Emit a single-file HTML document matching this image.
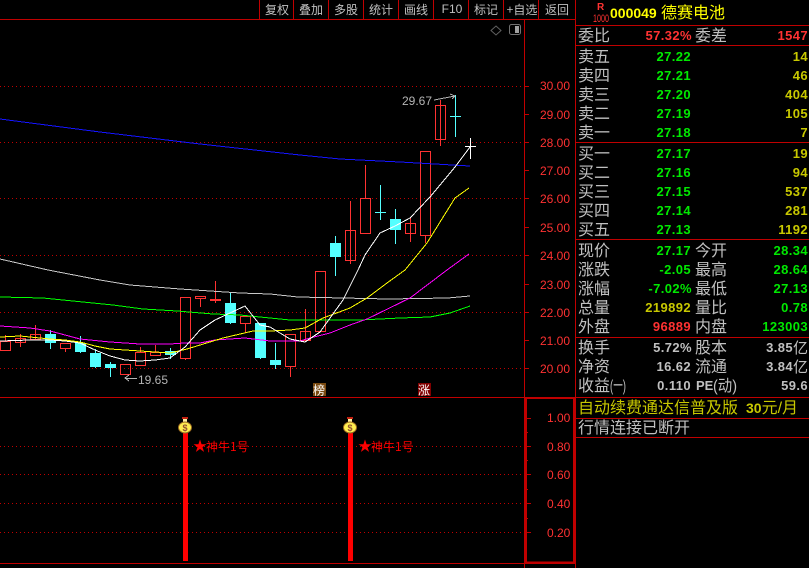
<!DOCTYPE html>
<html><head><meta charset="utf-8"><style>
html,body{margin:0;padding:0;background:#000;width:809px;height:568px;overflow:hidden}
svg{display:block;position:absolute;left:0;top:0}
text{font-family:"WenQuanYi Zen Hei","Noto Sans CJK SC",sans-serif;font-size:16px;fill:#c0c0c0}
.n{font-family:"Liberation Sans",sans-serif;font-weight:bold;font-size:13px;letter-spacing:.4px;text-anchor:end}
.g{fill:#00e800}.y{fill:#c8c800}.r{fill:#ff3232}.w{fill:#c0c0c0}
.t{font-size:12px;text-anchor:middle}
.p{font-family:"Liberation Sans",sans-serif;font-size:12px;fill:#ff3232}
.rc{fill:none;stroke:#ff3232}.rw{stroke:#ff3232}
.cc{fill:#54ffff;stroke:#54ffff}.cw{stroke:#54ffff}
</style></head><body>
<svg width="809" height="568" viewBox="0 0 809 568" xmlns="http://www.w3.org/2000/svg">
<!-- dotted grid -->
<g stroke="#c00000" stroke-dasharray="1 3" shape-rendering="crispEdges" fill="none">
<path d="M0 86.5H524M0 142.5H524M0 198.5H524M0 255.5H524M0 312.5H524M0 368.5H524M0 446.5H524M0 474.5H524M0 503.5H524M0 532.5H524"/>
</g>
<!-- frame lines -->
<g stroke="#c00000" shape-rendering="crispEdges" fill="none">
<path d="M0 19.5H575M524.5 19.5V568M575.5 0V568M0 397.5H575M0 563.5H575"/>
<path d="M259.5 0V19M293.5 0V19M328.5 0V19M363.5 0V19M398.5 0V19M433.5 0V19M468.5 0V19M503.5 0V19M538.5 0V19"/>
<path d="M575 25.5H809M575 45.5H809M575 142.5H809M575 239.5H809M575 337.5H809M575 397.5H809M575 418.5H809M575 437.5H809"/>
<path d="M525 86.5h4M525 114.5h4M525 142.5h4M525 170.5h4M525 198.5h4M525 227.5h4M525 255.5h4M525 284.5h4M525 312.5h4M525 340.5h4M525 368.5h4"/>
<path d="M527 418.5h4M527 446.5h4M527 474.5h4M527 503.5h4M527 532.5h4M527 432.5h1M527 460.5h1M527 489.5h1M527 518.5h1"/>
<rect x="526" y="398" width="48" height="164.500" stroke-width="2"/>
</g>
<!-- candles -->
<g shape-rendering="crispEdges">
<path class="rw" d="M5.5 335V341M20.5 334V347M35.5 325V340M65.5 349V352M140.5 347V352M155.5 345V352M185.5 359V360M200.5 299V307M215.5 281V303M245.5 324V333M290.5 367V377M305.5 309V342M350.5 201V264M365.5 165V198M410.5 218V242M425.5 235V243M440.5 100V146"/>
<path class="cw" d="M50.5 330V349M80.5 336V353M95.5 349V368M110.5 362V377M170.5 348V359M230.5 292V324M260.5 323V359M275.5 343V369M335.5 236V276M380.5 185V220M375 212.5H386M395.5 209V244M455.5 95V137M450 116.5H461"/>
<rect class="rc" x="0.5" y="341.5" width="10" height="9"/>
<rect class="rc" x="15.5" y="338.5" width="10" height="4"/>
<rect class="rc" x="30.5" y="334.5" width="10" height="5"/>
<rect class="cc" x="45.5" y="334.5" width="10" height="8"/>
<rect class="rc" x="60.5" y="343.5" width="10" height="5"/>
<rect class="cc" x="75.5" y="343.5" width="10" height="8"/>
<rect class="cc" x="90.5" y="353.5" width="10" height="13"/>
<rect class="cc" x="105.5" y="364.5" width="10" height="3"/>
<rect class="rc" x="120.5" y="364.5" width="10" height="10"/>
<rect class="rc" x="135.5" y="352.5" width="10" height="13"/>
<rect class="rc" x="150.5" y="352.5" width="10" height="3"/>
<rect class="cc" x="165.5" y="351.5" width="10" height="3"/>
<rect class="rc" x="180.5" y="297.5" width="10" height="61"/>
<rect class="rc" x="195.5" y="296.5" width="10" height="2"/>
<rect x="210" y="299" width="11" height="2" fill="#ff3232"/>
<rect class="cc" x="225.5" y="303.5" width="10" height="19"/>
<rect class="rc" x="240.5" y="316.5" width="10" height="7"/>
<rect class="cc" x="255.5" y="323.5" width="10" height="34"/>
<rect class="cc" x="270.5" y="360.5" width="10" height="4"/>
<rect class="rc" x="285.5" y="334.5" width="10" height="32"/>
<rect class="rc" x="300.5" y="331.5" width="10" height="9"/>
<rect class="rc" x="315.5" y="271.5" width="10" height="60"/>
<rect class="cc" x="330.5" y="243.5" width="10" height="13"/>
<rect class="rc" x="345.5" y="230.5" width="10" height="30"/>
<rect class="rc" x="360.5" y="198.5" width="10" height="35"/>
<rect class="cc" x="390.5" y="219.5" width="10" height="10"/>
<rect class="rc" x="405.5" y="223.5" width="10" height="10"/>
<rect class="rc" x="420.5" y="151.5" width="10" height="84"/>
<rect class="rc" x="435.5" y="105.5" width="10" height="34"/>
</g>
<!-- moving averages -->
<g fill="none" shape-rendering="crispEdges">
<polyline stroke="#c8c8c8" points="0,259 48,270 100,280 130,285 180,289 240,293 270,294 298,297 388,299 448,298 470,296"/>
<polyline stroke="#1414ff" points="0,119 100,132 200,144 300,155 340,159 400,162 470,166"/>
<polyline stroke="#00ff00" points="0,297 43,298 73,301 113,305 143,309 177,311 213,314 240,315 270,318 290,320 330,320 360,320 400,318 430,317 450,313 470,306"/>
<polyline stroke="#ff00ff" points="0,326 30,328 50,331 80,339 110,342 140,344 170,344 185,343 200,343 215,340 245,338 270,341 300,341 310,338 330,333 350,325 367,319 410,298 447,270 469,254"/>
<polyline stroke="#ffff00" points="0,337 20,336 50,339 65,340 80,342 95,346 110,349 125,350 140,351 155,352 170,353 187,349 223,338 253,331 270,331 290,330 305,328 323,318 350,308 367,298 387,283 405,270 427,243 455,198 469,188"/>
<polyline stroke="#ffffff" points="0,341 30,340 50,340 65,341 80,343 95,350 110,356 125,360 140,361 155,360 170,358 185,347 200,330 215,320 230,313 245,306 260,325 270,327 290,339 305,342 320,332 343,300 358,270 365,255 380,233 395,226 410,218 430,197 455,167 470,147"/>
<path stroke="#fff" d="M470.5 138V159M465 146.5H476"/>
</g>
<!-- annotations -->
<text x="402" y="105" style="font-family:'Liberation Sans',sans-serif;font-size:12px;fill:#b4b4b4">29.67</text>
<path d="M434 100L455 96M450 94L455 96L452 99" stroke="#b4b4b4" fill="none" shape-rendering="crispEdges"/>
<text x="138" y="384" style="font-family:'Liberation Sans',sans-serif;font-size:12px;fill:#b4b4b4">19.65</text>
<path d="M125 378.5H137M129 375L125 378L129 381" stroke="#b4b4b4" fill="none" shape-rendering="crispEdges"/>
<rect x="313" y="383" width="13" height="13" fill="#7a4a10"/>
<text x="313" y="394.500" style="font-size:12px;fill:#fff">榜</text>
<rect x="418" y="383" width="13" height="13" fill="#800000"/>
<text x="418" y="394.500" style="font-size:12px;fill:#fff">涨</text>
<path d="M496 26L501 30.500L496 35L491 30.500Z" fill="none" stroke="#606060"/>
<rect x="509.500" y="24.500" width="11" height="10" rx="2" fill="none" stroke="#707070"/>
<rect x="515" y="26" width="4" height="7" fill="#a0a0a0"/>
<!-- toolbar -->
<text class="t" x="277" y="14">复权</text><text class="t" x="311" y="14">叠加</text><text class="t" x="346" y="14">多股</text><text class="t" x="381" y="14">统计</text><text class="t" x="416" y="14">画线</text><text class="t" x="452" y="13" style="font-family:'Liberation Sans',sans-serif;font-size:12px">F10</text><text class="t" x="486" y="14">标记</text><text class="t" x="522" y="14">+自选</text><text class="t" x="557" y="14">返回</text>
<!-- axis labels -->
<g>
<text class="p" x="540" y="90">30.00</text><text class="p" x="540" y="119">29.00</text><text class="p" x="540" y="147">28.00</text><text class="p" x="540" y="175">27.00</text><text class="p" x="540" y="203">26.00</text><text class="p" x="540" y="232">25.00</text><text class="p" x="540" y="260">24.00</text><text class="p" x="540" y="289">23.00</text><text class="p" x="540" y="317">22.00</text><text class="p" x="540" y="345">21.00</text><text class="p" x="540" y="373">20.00</text>
<text class="p" x="547" y="422">1.00</text><text class="p" x="547" y="451">0.80</text><text class="p" x="547" y="479">0.60</text><text class="p" x="547" y="508">0.40</text><text class="p" x="547" y="537">0.20</text>
</g>
<!-- signal bars -->
<g shape-rendering="crispEdges"><rect x="183" y="433" width="5" height="128" fill="#ff0000"/><rect x="348" y="433" width="5" height="128" fill="#ff0000"/></g>
<g>
<rect x="182" y="417" width="6" height="2" fill="#c02010"/><rect x="183" y="419" width="4" height="3" fill="#fff0a0"/>
<ellipse cx="185" cy="427.500" rx="6.500" ry="5.500" fill="#ffee50" stroke="#9a6a20"/>
<text x="182.500" y="431" style="font-family:'Liberation Sans',sans-serif;font-size:9px;font-weight:bold;fill:#905030">$</text>
</g>
<g>
<rect x="347" y="417" width="6" height="2" fill="#c02010"/><rect x="348" y="419" width="4" height="3" fill="#fff0a0"/>
<ellipse cx="350" cy="427.500" rx="6.500" ry="5.500" fill="#ffee50" stroke="#9a6a20"/>
<text x="347.500" y="431" style="font-family:'Liberation Sans',sans-serif;font-size:9px;font-weight:bold;fill:#905030">$</text>
</g>
<text x="193" y="451" style="font-size:14px;fill:#f00">★</text><text x="206" y="451" style="font-size:12px;fill:#f00">神牛1号</text>
<text x="358" y="451" style="font-size:14px;fill:#f00">★</text><text x="371" y="451" style="font-size:12px;fill:#f00">神牛1号</text>
<!-- quote header -->
<text x="597" y="10" style="font-family:'Liberation Sans',sans-serif;font-size:10px;font-weight:bold;fill:#ff3232">R</text>
<text x="593" y="22" textLength="16" lengthAdjust="spacingAndGlyphs" style="font-family:'Liberation Sans',sans-serif;font-size:11px;fill:#ff3232">1000</text>
<text x="610" y="18" style="font-family:'Liberation Sans',sans-serif;font-size:14px;font-weight:bold;fill:#ffff00">000049</text>
<text x="661" y="18" style="fill:#ffff00">德赛电池</text>
<!-- labels -->
<g>
<text x="578" y="41">委比</text><text x="695" y="41">委差</text>
<text x="578" y="62">卖五</text><text x="578" y="81">卖四</text><text x="578" y="100">卖三</text><text x="578" y="119">卖二</text><text x="578" y="138">卖一</text>
<text x="578" y="159">买一</text><text x="578" y="178">买二</text><text x="578" y="197">买三</text><text x="578" y="216">买四</text><text x="578" y="235">买五</text>
<text x="578" y="256">现价</text><text x="695" y="256">今开</text>
<text x="578" y="275">涨跌</text><text x="695" y="275">最高</text>
<text x="578" y="294">涨幅</text><text x="695" y="294">最低</text>
<text x="578" y="313">总量</text><text x="695" y="313">量比</text>
<text x="578" y="332">外盘</text><text x="695" y="332">内盘</text>
<text x="578" y="353">换手</text><text x="695" y="353">股本</text>
<text x="578" y="372">净资</text><text x="695" y="372">流通</text>
<text x="578" y="391">收益</text><text x="610" y="391" textLength="16" lengthAdjust="spacingAndGlyphs" style="font-family:'Liberation Sans','WenQuanYi Zen Hei',sans-serif">(一)</text>
<text x="696" y="390" style="font-family:'Liberation Sans',sans-serif;font-size:13px;font-weight:bold">PE</text><text x="713" y="391" textLength="24" lengthAdjust="spacingAndGlyphs" style="font-family:'Liberation Sans','WenQuanYi Zen Hei',sans-serif">(动)</text>
<text x="578" y="413" style="fill:#c8c800">自动续费通达信普及版</text>
<text x="746" y="413" style="fill:#c8c800;font-family:'Liberation Sans','WenQuanYi Zen Hei',sans-serif"><tspan font-weight="bold" font-size="14">30</tspan>元/月</text>
<text x="578" y="433">行情连接已断开</text>
</g>
<!-- numbers -->
<g>
<text class="n r" x="692" y="40">57.32%</text><text class="n r" x="808" y="40">1547</text>
<text class="n g" x="691" y="61">27.22</text><text class="n y" x="808" y="61">14</text>
<text class="n g" x="691" y="80">27.21</text><text class="n y" x="808" y="80">46</text>
<text class="n g" x="691" y="99">27.20</text><text class="n y" x="808" y="99">404</text>
<text class="n g" x="691" y="118">27.19</text><text class="n y" x="808" y="118">105</text>
<text class="n g" x="691" y="137">27.18</text><text class="n y" x="808" y="137">7</text>
<text class="n g" x="691" y="158">27.17</text><text class="n y" x="808" y="158">19</text>
<text class="n g" x="691" y="177">27.16</text><text class="n y" x="808" y="177">94</text>
<text class="n g" x="691" y="196">27.15</text><text class="n y" x="808" y="196">537</text>
<text class="n g" x="691" y="215">27.14</text><text class="n y" x="808" y="215">281</text>
<text class="n g" x="691" y="234">27.13</text><text class="n y" x="808" y="234">1192</text>
<text class="n g" x="691" y="255">27.17</text><text class="n g" x="808" y="255">28.34</text>
<text class="n g" x="691" y="274">-2.05</text><text class="n g" x="808" y="274">28.64</text>
<text class="n g" x="692" y="293">-7.02%</text><text class="n g" x="808" y="293">27.13</text>
<text class="n y" x="691" y="312">219892</text><text class="n g" x="808" y="312">0.78</text>
<text class="n r" x="691" y="331">96889</text><text class="n g" x="808" y="331">123003</text>
<text class="n w" x="692" y="352">5.72%</text><text class="n w" x="793" y="352">3.85</text><text x="793" y="353" style="font-size:15px">亿</text>
<text class="n w" x="691" y="371">16.62</text><text class="n w" x="793" y="371">3.84</text><text x="793" y="372" style="font-size:15px">亿</text>
<text class="n w" x="691" y="390">0.110</text><text class="n w" x="808" y="390">59.6</text>
</g>
</svg>
</body></html>
